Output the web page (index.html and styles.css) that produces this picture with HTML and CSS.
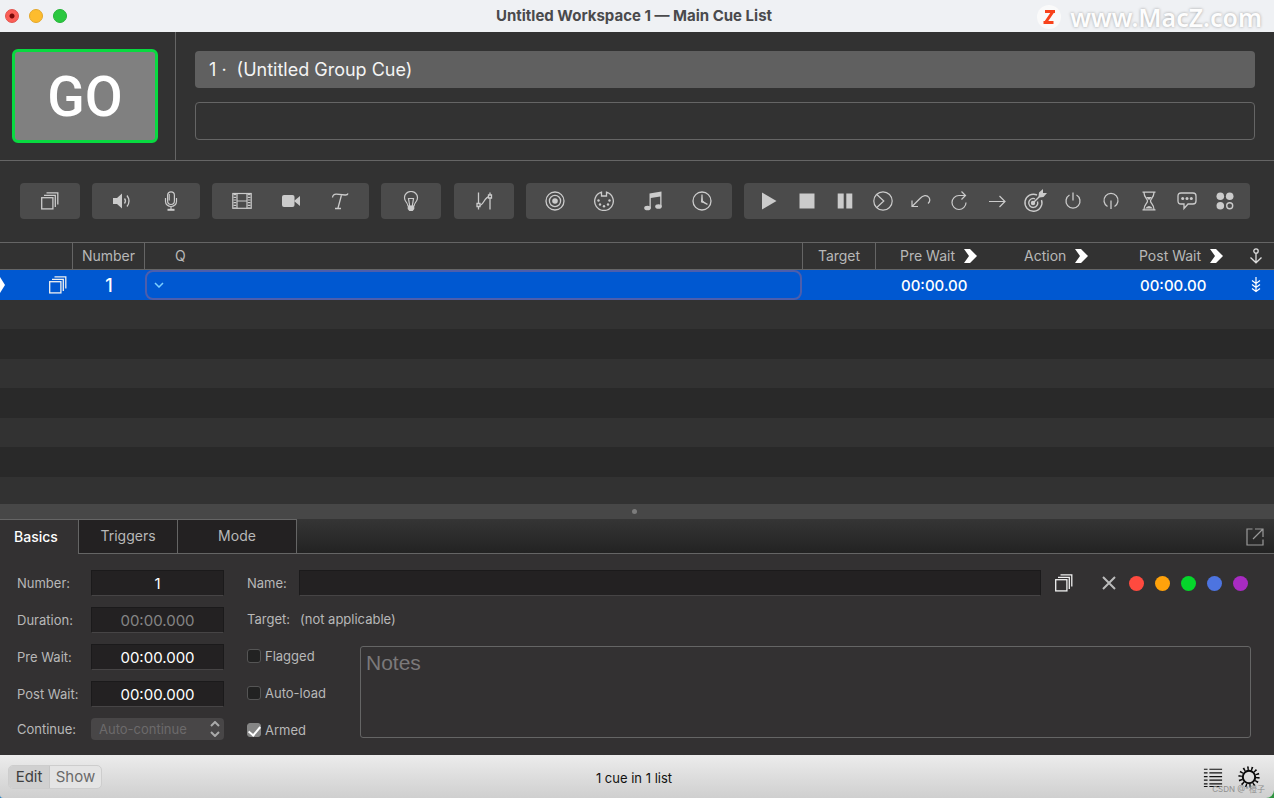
FILE: index.html
```html
<!doctype html>
<html lang="en">
<head>
    <meta charset="utf-8">
    <meta name="viewport" content="width=device-width, initial-scale=1">
    <title>Untitled Workspace 1 — Main Cue List</title>
    <link rel="stylesheet" href="styles.css">
</head>

<body>
<!-- Shared icons -->
<svg class="sprite" aria-hidden="true">
    <symbol id="i-group" viewBox="0 0 20 20">
        <g fill="none" stroke="currentColor" stroke-width="1.3">
            <rect x="1.7" y="6.7" width="11.2" height="11.2"/>
            <path d="M4 4.3h11.3V16M6.500 1.8h11.300V13.500"/>
        </g>
    </symbol>
</svg>

<div class="window">
    <!-- Title bar -->
    <header class="titlebar">
        <div class="lights">
            <button class="light light-close" aria-label="Close"></button>
            <button class="light light-min" aria-label="Minimize"></button>
            <button class="light light-zoom" aria-label="Zoom"></button>
        </div>
        <h1 class="title">Untitled Workspace 1 — Main Cue List</h1>
        <div class="site-mark">
            <svg width="24" height="24" viewBox="0 0 24 24" aria-hidden="true">
                <circle cx="12" cy="12" r="12" fill="#fafafa"/>
                <path d="M8 6.500h10M6.500 17.500h10M16 6.500L8.500 17.500" fill="none" stroke="#f8431c" stroke-width="3"/>
            </svg>
            <span>www.MacZ.com</span>
        </div>
    </header>

    <!-- GO button and standby cue -->
    <section class="standby">
        <div class="go-cell">
            <button class="go">GO</button>
        </div>
        <div class="standby-fields">
            <div class="standby-name"><span>1 ·</span><span>(Untitled Group Cue)</span></div>
            <div class="standby-notes"></div>
        </div>
    </section>

    <!-- Cue toolbar -->
    <nav class="toolbar">
        <div class="tool-group">
            <button aria-label="Group"><svg viewBox="0 0 20 20"><use href="#i-group"/></svg></button>
        </div>
        <div class="tool-group">
            <button aria-label="Audio"><svg viewBox="0 0 20 20">
                <path d="M1 7h4l5-4.500v15L5 13H1z" fill="currentColor"/>
                <path d="M12.500 7.500q2 2.500 0 5M15 4.500q4 5.500 0 11" fill="none" stroke="currentColor" stroke-width="1.3"/>
            </svg></button>
            <button aria-label="Mic"><svg viewBox="0 0 20 20" fill="none" stroke="currentColor" stroke-width="1.200">
                <rect x="6.600" y=".8" width="6.800" height="12.700" rx="3.400"/>
                <path d="M8.200 3v6.500M4.500 7v3.500a5.500 5 0 0 0 11 0V7M10 15.500v3"/>
                <path d="M6.500 18.800h7" stroke-width="2"/>
            </svg></button>
        </div>
        <div class="tool-group">
            <button aria-label="Video"><svg viewBox="0 0 20 20" fill="none" stroke="currentColor" stroke-width="1.200">
                <rect x=".8" y="2.500" width="18.400" height="14.800"/>
                <path d="M5 2.500v15M15 2.500v15M5 10h10"/>
                <path d="M2.900 3v14M17.100 3v14" stroke-width="2.800" stroke-dasharray="1.200 1.500"/>
            </svg></button>
            <button aria-label="Camera"><svg viewBox="0 0 20 20" fill="currentColor">
                <rect x="1" y="4" width="12.500" height="12" rx="2"/>
                <path d="M13 10l6-5v10z"/>
            </svg></button>
            <button aria-label="Text"><svg viewBox="0 0 20 20" fill="none" stroke="currentColor" stroke-width="1.300">
                <path d="M2.500 6.500Q3 3 6.500 3.200L15 4q2.500.2 3-1.500M11.500 4L8 17M5 17.500h6"/>
            </svg></button>
        </div>
        <div class="tool-group">
            <button aria-label="Light"><svg viewBox="0 0 20 20" fill="none" stroke="currentColor" stroke-width="1.200">
                <path d="M7 15Q6.500 12.500 4.500 10A6.500 6.500 0 0 1 3.500 6.500 6.500 6 0 0 1 16.500 6.500 6.500 6.500 0 0 1 15.500 10Q13.500 12.500 13 15M8.700 15L7.500 7.500h5L11.300 15"/>
                <path d="M6.700 14.500h6.600V18l-1.600 2H8.300l-1.600-2z" fill="currentColor" stroke="none"/>
            </svg></button>
        </div>
        <div class="tool-group">
            <button aria-label="Fade"><svg viewBox="0 0 20 20" fill="none" stroke="currentColor" stroke-width="1.300">
                <path d="M4.500 1.500v17M16 1.500v17M5 14.500C10 14.500 10 6 15.500 5.500"/>
                <path d="M3 12.500h3v3H3zM14.500 4h3v3h-3z" fill="#4b4b4b"/>
            </svg></button>
        </div>
        <div class="tool-group">
            <button aria-label="Network"><svg viewBox="0 0 20 20" fill="none" stroke="currentColor" stroke-width="1.300">
                <circle cx="10" cy="10" r="9"/><circle cx="10" cy="10" r="5.600"/>
                <circle cx="10" cy="10" r="2.800" fill="currentColor" stroke="none"/>
            </svg></button>
            <button aria-label="MIDI"><svg viewBox="0 0 20 20" fill="none" stroke="currentColor" stroke-width="1.300">
                <path d="M7.500 1.200A9.300 9.300 0 1 0 12.500 1.200V5h-5z"/>
                <g fill="currentColor" stroke="none"><circle cx="4.500" cy="9.500" r="1.200"/><circle cx="15.500" cy="9.500" r="1.200"/><circle cx="6" cy="13.500" r="1.200"/><circle cx="14" cy="13.500" r="1.200"/><circle cx="10" cy="15.300" r="1.200"/></g>
            </svg></button>
            <button aria-label="MIDI File"><svg viewBox="0 0 20 20" fill="currentColor">
                <path d="M6.500 2.500L18.500.5v15h-1.300V5.500L7.800 7v10.500H6.500z"/>
                <ellipse cx="4.500" cy="17" rx="3.300" ry="2.300"/><ellipse cx="15.500" cy="15.500" rx="3.300" ry="2.300"/>
            </svg></button>
            <button aria-label="Timecode"><svg viewBox="0 0 20 20" fill="none" stroke="currentColor" stroke-width="1.300">
                <circle cx="10" cy="10" r="9"/>
                <path d="M10 3.500V10.500l5.500 2.800"/>
                <path d="M8.800 11.300L10 5l.8 4.500 3.500 3z" fill="currentColor" stroke="none"/>
            </svg></button>
        </div>
        <div class="tool-group transport">
            <button aria-label="Start"><svg viewBox="0 0 20 20" fill="currentColor"><path d="M3 1.500L17.500 10 3 18.500z"/></svg></button>
            <button aria-label="Stop"><svg viewBox="0 0 20 20" fill="currentColor"><path d="M2.500 2.500h15v15h-15z"/></svg></button>
            <button aria-label="Pause"><svg viewBox="0 0 20 20" fill="currentColor"><path d="M2.700 2.500h6v15h-6zM11.300 2.500h6v15h-6z"/></svg></button>
            <button aria-label="Load"><svg viewBox="0 0 20 20" fill="none" stroke="currentColor" stroke-width="1.200">
                <circle cx="10" cy="10" r="9.200"/><path d="M3.800 3.500L10.800 10l-7 6.500"/>
            </svg></button>
            <button aria-label="Reset"><svg viewBox="0 0 20 20" fill="none" stroke="currentColor" stroke-width="1.200">
                <path d="M1 15.500L9 7.500C12 4 16 3.500 18 6.500Q20 10 17 12.500M1 9.500v6h6"/>
            </svg></button>
            <button aria-label="Devamp"><svg viewBox="0 0 20 20" fill="none" stroke="currentColor" stroke-width="1.200">
                <path d="M16 4.500H10A7 7 0 1 0 17 11.500M12.500.5l4 4-4 4"/>
            </svg></button>
            <button aria-label="GoTo"><svg viewBox="0 0 20 20" fill="none" stroke="currentColor" stroke-width="1.200">
                <path d="M2 10.500h16M12.500 5l5.500 5.500-5.500 5.500"/>
            </svg></button>
            <button aria-label="Target"><svg class="wide" viewBox="0 0 24 24" fill="none" stroke="currentColor" stroke-width="1.400">
                <path d="M14 6A8.500 8.500 0 1 0 18.500 11M12 9.800A4.500 4.500 0 1 0 14.500 12.500"/>
                <circle cx="10" cy="14" r="1.500" fill="currentColor"/>
                <path d="M10 14l8-8"/>
                <path d="M15.500 7.500l.5-4 4-3.500v4h4L20.500 8l-4 .5z" fill="currentColor" stroke="none"/>
            </svg></button>
            <button aria-label="Arm"><svg viewBox="0 0 20 20" fill="none" stroke="currentColor" stroke-width="1.300">
                <path d="M6.500 4A7 7 0 1 0 13.500 4M10 1.500v8"/>
            </svg></button>
            <button aria-label="Disarm"><svg viewBox="0 0 20 20" fill="none" stroke="currentColor" stroke-width="1.300">
                <path d="M6.500 15.500A7 7 0 1 1 13.500 15.500M10 9.500v8.500"/>
            </svg></button>
            <button aria-label="Wait"><svg viewBox="0 0 20 20" fill="none" stroke="currentColor" stroke-width="1.300">
                <path d="M3.500 1.200h13M3.500 18.800h13M5 1.500C5 6.500 8.500 7.500 8.500 10S5 13.500 5 18.500M15 1.500C15 6.500 11.500 7.500 11.500 10S15 13.500 15 18.500"/>
                <path d="M7 6h6l-3 3zM6 17.500q4-5 8 0z" fill="currentColor" stroke="none"/>
            </svg></button>
            <button aria-label="Memo"><svg viewBox="0 0 20 20" fill="none" stroke="currentColor" stroke-width="1.300">
                <path d="M4 2h12q3 0 3 3v5q0 3-3 3h-5l-4 4.500V13H4q-3 0-3-3V5q0-3 3-3z"/>
                <g fill="currentColor" stroke="none"><circle cx="5.700" cy="7.500" r="1.500"/><circle cx="10" cy="7.500" r="1.500"/><circle cx="14.300" cy="7.500" r="1.500"/></g>
            </svg></button>
            <button aria-label="Script"><svg viewBox="0 0 20 20" fill="currentColor">
                <circle cx="5.300" cy="5.300" r="3.800"/><circle cx="14.700" cy="5.300" r="3.800"/><circle cx="5.300" cy="14.700" r="3.800"/>
                <circle cx="14.700" cy="14.700" r="3" fill="none" stroke="currentColor" stroke-width="1.400"/>
            </svg></button>
        </div>
    </nav>

    <!-- Cue list -->
    <main class="cue-list">
        <table>
            <colgroup>
                <col class="col-status"><col class="col-number"><col><col class="col-target">
                <col class="col-pre"><col class="col-action"><col class="col-post"><col class="col-anchor">
            </colgroup>
            <thead>
            <tr>
                <th></th>
                <th>Number</th>
                <th class="th-q">Q</th>
                <th>Target</th>
                <th class="th-time">Pre Wait <svg class="arrow" viewBox="0 0 14 14"><path d="M1 0h6l7 7-7 7H1l5-7z" fill="#fff"/></svg></th>
                <th class="th-time">Action <svg class="arrow" viewBox="0 0 14 14"><path d="M1 0h6l7 7-7 7H1l5-7z" fill="#fff"/></svg></th>
                <th class="th-time">Post Wait <svg class="arrow" viewBox="0 0 14 14"><path d="M1 0h6l7 7-7 7H1l5-7z" fill="#fff"/></svg></th>
                <th><svg class="mini" viewBox="0 0 14 16" fill="none" stroke="#ddd" stroke-width="1.300"><circle cx="7" cy="3" r="2.200"/><path d="M7 5v9.500M1.500 9.500L7 14.800l5.500-5.300"/></svg></th>
            </tr>
            </thead>
            <tbody>
            <tr class="selected">
                <td class="status"><svg class="playhead" viewBox="0 0 5 16"><path d="M0 0l5 8-5 8z" fill="#fff"/></svg><svg class="cue-icon" viewBox="0 0 20 20"><use href="#i-group"/></svg></td>
                <td class="number">1</td>
                <td class="q">
                    <div class="q-edit">
                        <svg viewBox="0 0 10 6" aria-hidden="true"><path d="M1 1l4 4 4-4" fill="none" stroke="#7dd0ff" stroke-width="1.500"/></svg>
                        <input type="text" aria-label="Cue name">
                    </div>
                </td>
                <td></td>
                <td class="time">00:00.00</td>
                <td></td>
                <td class="time">00:00.00</td>
                <td><svg class="mini" viewBox="0 0 14 16" fill="none" stroke="#fff" stroke-width="1.200"><path d="M7 0v14.500M3 3.500l4 3 4-3M3 7.500l4 3 4-3M3 11.500l4 3 4-3"/></svg></td>
            </tr>
            <tr><td colspan="8"></td></tr>
            <tr><td colspan="8"></td></tr>
            <tr><td colspan="8"></td></tr>
            <tr><td colspan="8"></td></tr>
            <tr><td colspan="8"></td></tr>
            <tr><td colspan="8"></td></tr>
            <tr><td colspan="8"></td></tr>
            </tbody>
        </table>
    </main>

    <div class="splitter"><span></span></div>

    <!-- Inspector -->
    <section class="inspector">
        <div class="tabs">
            <button class="tab tab-basics active">Basics</button>
            <button class="tab tab-triggers">Triggers</button>
            <button class="tab tab-mode">Mode</button>
            <button class="popout" aria-label="Open in new window"><svg viewBox="0 0 18 18" fill="none" stroke="#9a9a9a" stroke-width="1.200">
                <path d="M6.500 1H1v16h16v-5.500M9 1h8v8M17 1L7 11"/>
            </svg></button>
        </div>
        <form class="basics">
            <div class="timing">
                <label for="number">Number:</label>
                <input class="field" id="number" type="text" value="1">
                <label for="duration">Duration:</label>
                <input class="field" id="duration" type="text" value="00:00.000" disabled>
                <label for="pre">Pre Wait:</label>
                <input class="field" id="pre" type="text" value="00:00.000">
                <label for="post">Post Wait:</label>
                <input class="field" id="post" type="text" value="00:00.000">
                <label for="continue">Continue:</label>
                <div class="select">
                    <select id="continue" disabled>
                        <option>Auto-continue</option>
                    </select>
                    <svg viewBox="0 0 10 16" aria-hidden="true"><path d="M1 5l4-4 4 4M1 11l4 4 4-4" fill="none" stroke="#aaa" stroke-width="2"/></svg>
                </div>
            </div>
            <div class="details">
                <div class="name-row">
                    <label for="name">Name:</label>
                    <input class="field name" id="name" type="text">
                    <svg class="cue-icon" viewBox="0 0 20 20" aria-hidden="true"><use href="#i-group"/></svg>
                    <div class="swatches">
                        <button type="button" class="no-color" aria-label="No color"><svg viewBox="0 0 14 14"><path d="M1 1l12 12M13 1L1 13" stroke="#bbb" stroke-width="2"/></svg></button>
                        <button type="button" class="swatch red" aria-label="Red"></button>
                        <button type="button" class="swatch orange" aria-label="Orange"></button>
                        <button type="button" class="swatch green" aria-label="Green"></button>
                        <button type="button" class="swatch blue" aria-label="Blue"></button>
                        <button type="button" class="swatch purple" aria-label="Purple"></button>
                    </div>
                </div>
                <div class="target-row"><span>Target:</span><span>(not applicable)</span></div>
                <div class="lower">
                    <div class="checks">
                        <label><input type="checkbox">Flagged</label>
                        <label><input type="checkbox">Auto-load</label>
                        <label><input type="checkbox" checked>Armed</label>
                    </div>
                    <textarea placeholder="Notes" aria-label="Notes"></textarea>
                </div>
            </div>
        </form>
    </section>

    <!-- Footer -->
    <footer class="footer">
        <div class="modes">
            <button class="on">Edit</button>
            <button>Show</button>
        </div>
        <div class="count">1 cue in 1 list</div>
        <div class="footer-tools">
            <button aria-label="Lists"><svg viewBox="0 0 20 22" fill="none" stroke="#111">
                <path d="M0 2.500h4M6 2.500h14M0 6.500h4M6 6.500h14M0 10.500h4M6 10.500h14M0 14.500h4M6 14.500h14M0 18.500h4M6 18.500h14M0 21.500h4M6 21.500h14" stroke-width="1.300"/>
            </svg></button>
            <button aria-label="Settings"><svg viewBox="0 0 22 22" fill="none" stroke="#0a0a0a">
                <circle cx="11" cy="11" r="6.200" stroke-width="2"/>
                <circle cx="11" cy="11" r="8.800" stroke-width="3.600" stroke-dasharray="1.500 2.449"/>
            </svg></button>
        </div>
        <span class="credit">CSDN @*橙子</span>
    </footer>
</div>
</body>
</html>
```
FILE: styles.css
```css
* {
    box-sizing: border-box;
}

:root {
    --bg: #323232;
    --line: #656565;
    --text: #b8b8b8;
    --field: #232122;
    --blue: #0058d1;
}

body {
    margin: 0;
    background: linear-gradient(90deg, #1f7fc4 50%, #2f9440 50%);
    color: var(--text);
    font-family: Inter, "Liberation Sans", "Noto Sans CJK SC", sans-serif;
    font-size: 13px;
}

button,
input,
select,
textarea {
    font: inherit;
    color: inherit;
    padding: 0;
    border: 0;
    background: none;
}

svg {
    display: block;
}

.sprite {
    position: absolute;
    width: 0;
    height: 0;
}

.window {
    display: flex;
    flex-direction: column;
    height: 100vh;
}

/* Title bar */
.titlebar {
    position: relative;
    display: flex;
    align-items: center;
    height: 32px;
    flex: none;
    background: #eff1f4;
}

.lights {
    display: flex;
    gap: 10px;
    width: 80px;
    padding-left: 5px;
}

.light {
    width: 14px;
    height: 14px;
    border-radius: 50%;
}

.light-close {
    background: radial-gradient(circle, #7a0a08 2px, #fb5f57 3px);
    border: 1px solid #e2504a;
}

.light-min {
    background: #fdbc2e;
    border: 1px solid #e3a72b;
}

.light-zoom {
    background: #2ac83f;
    border: 1px solid #25b338;
}

.title {
    flex: 1;
    margin: 0 86px 0 0;
    text-align: center;
    font-size: 15px;
    line-height: 30px;
    font-weight: 700;
    color: #4a4a4c;
}

.site-mark {
    position: absolute;
    right: 12px;
    top: 4px;
    display: flex;
    align-items: center;
    gap: 9px;
    font: 600 25px/26px "Noto Sans", sans-serif;
    color: #fdfdfd;
    text-shadow: 0 0 3px #a0a0a0;
}

/* Standby area */
.standby {
    display: flex;
    flex: none;
    height: 129px;
    background: var(--bg);
    border-bottom: 1px solid var(--line);
}

.go-cell {
    width: 176px;
    padding: 17px 0 0 12px;
    border-right: 1px solid var(--line);
}

.go {
    width: 146px;
    height: 94px;
    padding-top: 2px;
    border: 3px solid #08da40;
    border-radius: 6px;
    background: #808080;
    color: #fff;
    font: 500 55px/86px Roboto, sans-serif;
}

.standby-fields {
    flex: 1;
    display: flex;
    flex-direction: column;
    gap: 14px;
    padding: 19px 19px 0;
}

.standby-name {
    display: flex;
    gap: 10px;
    height: 37px;
    padding-left: 14px;
    border-radius: 4px;
    background: #606060;
    color: #f4f4f4;
    font-size: 18px;
    line-height: 37px;
}

.standby-notes {
    height: 38px;
    border: 1px solid var(--line);
    border-radius: 4px;
}

/* Toolbar */
.toolbar {
    display: flex;
    justify-content: space-between;
    flex: none;
    height: 81px;
    padding: 22px 24px 0 20px;
    background: var(--bg);
}

.tool-group {
    display: flex;
    justify-content: center;
    min-width: 60px;
    height: 36px;
    padding: 0 5px;
    border-radius: 4px;
    background: #4b4b4b;
    color: #cbcbcb;
}

.tool-group button {
    display: flex;
    align-items: center;
    justify-content: center;
    width: 49px;
}

.tool-group svg {
    width: 20px;
    height: 20px;
}

.tool-group .wide {
    width: 24px;
    height: 24px;
}

.transport {
    padding: 0 6px;
}

.transport button {
    width: 38px;
}

/* Cue list */
.cue-list {
    flex: 1;
    min-height: 0;
    overflow: hidden;
    background: var(--bg);
}

table {
    width: 100%;
    table-layout: fixed;
    border-collapse: separate;
    border-spacing: 0;
}

.col-status,
.col-target {
    width: 73px;
}

.col-number {
    width: 72px;
}

.col-pre {
    width: 124px;
}

.col-action {
    width: 115px;
}

.col-post {
    width: 123px;
}

.col-anchor {
    width: 36px;
}

th,
td {
    padding: 0;
}

th {
    height: 28px;
    border-top: 1px solid var(--line);
    border-bottom: 1px solid var(--line);
    font-size: 14px;
    line-height: 24px;
    font-weight: 400;
}

th:nth-child(-n+4) {
    border-right: 1px solid var(--line);
}

.th-q {
    padding-left: 30px;
    text-align: left;
}

.th-time {
    padding-left: 24px;
    text-align: left;
    white-space: nowrap;
}

.arrow {
    display: inline-block;
    width: 14px;
    height: 14px;
    margin-left: 4px;
    vertical-align: -2px;
}

.mini {
    width: 14px;
    height: 16px;
    margin: 0 auto;
}

td {
    height: 29px;
}

tr:nth-child(odd) td {
    height: 30px;
}

tbody tr:nth-child(odd) {
    background: #292929;
}

tbody tr.selected {
    background: var(--blue);
    color: #fff;
}

.status {
    position: relative;
}

.playhead {
    position: absolute;
    left: 0;
    top: 7px;
    width: 5px;
    height: 16px;
}

.cue-icon {
    width: 20px;
    height: 20px;
    color: #f0f0f0;
}

.status .cue-icon {
    margin-left: 48px;
}

.number {
    text-align: center;
    font-size: 18px;
    font-weight: 500;
}

.q-edit {
    display: flex;
    align-items: center;
    gap: 8px;
    height: 30px;
    margin-right: 1px;
    padding: 0 7px;
    border: 2px solid #4d5eac;
    border-radius: 8px;
}

.q-edit svg {
    width: 10px;
    height: 6px;
}

.q-edit input {
    flex: 1;
    outline: 0;
}

.time {
    padding-left: 25px;
    font-size: 15px;
    font-weight: 500;
}

.splitter {
    display: flex;
    align-items: center;
    justify-content: center;
    flex: none;
    height: 15px;
    padding-right: 6px;
    background: #474747;
}

.splitter span {
    width: 5px;
    height: 5px;
    border-radius: 50%;
    background: #7c7c7c;
}

/* Inspector */
.inspector {
    flex: none;
    height: 236px;
    background: #333132;
}

.tabs {
    display: flex;
    height: 35px;
    background: linear-gradient(#353535, #222);
    box-shadow: inset 0 -1px var(--line);
}

.tab {
    padding-bottom: 2px;
    border: 1px solid var(--line);
    border-left: 0;
    background: var(--field);
    font-size: 14px;
}

.tab.active {
    border-bottom: 0;
    background: #333132;
    color: #fff;
    font-weight: 500;
}

.tab-basics {
    width: 79px;
    padding-right: 6px;
}

.tab-triggers {
    width: 99px;
}

.tab-mode {
    width: 119px;
}

.popout {
    margin: 0 10px 0 auto;
}

.popout svg {
    width: 18px;
    height: 18px;
}

.basics {
    display: flex;
    gap: 23px;
    padding: 16px 23px 0 17px;
}

.timing {
    display: grid;
    grid-template-columns: 74px 133px;
    grid-template-rows: repeat(4, 26px) 22px;
    row-gap: 11px;
    align-items: center;
}

.timing label {
    line-height: 24px;
}

.field {
    width: 100%;
    height: 26px;
    border: 1px solid #1b1a1b;
    border-bottom-color: #464445;
    background: var(--field);
    color: #fff;
    font-size: 15px;
    text-align: center;
}

.field:disabled {
    color: #858585;
}

.select {
    position: relative;
}

.select select {
    appearance: none;
    display: block;
    width: 100%;
    height: 22px;
    padding-left: 8px;
    border-radius: 4px;
    background: #484647;
    color: #6c6a6b;
    opacity: 1;
    font-size: 13px;
}

.select svg {
    position: absolute;
    right: 4px;
    top: 3px;
    width: 10px;
    height: 16px;
}

.details {
    flex: 1;
    display: flex;
    flex-direction: column;
    gap: 11px;
}

.name-row {
    display: flex;
    align-items: center;
    height: 26px;
}

.name-row label {
    width: 52px;
}

.name {
    flex: 1;
    text-align: left;
    margin-right: 13px;
}

.swatches {
    display: flex;
    align-items: center;
    gap: 11px;
    margin-left: 28px;
    padding-right: 3px;
}

.no-color {
    margin-right: 2px;
}

.no-color svg {
    width: 14px;
    height: 14px;
}

.swatch {
    width: 15px;
    height: 15px;
    border-radius: 50%;
}

.red {
    background: #ff4a3f;
}

.orange {
    background: #ffa20b;
}

.green {
    background: #05d62b;
}

.blue {
    background: #4d74e0;
}

.purple {
    background: #a82bc2;
}

.target-row {
    display: flex;
    gap: 10px;
    height: 26px;
    line-height: 24px;
}

.lower {
    display: flex;
    gap: 13px;
}

.checks {
    display: flex;
    flex-direction: column;
    gap: 13px;
    width: 100px;
}

.checks label {
    display: flex;
    align-items: center;
    gap: 4px;
    height: 24px;
}

.checks input {
    appearance: none;
    width: 14px;
    height: 14px;
    margin: 0;
    border: 1px solid #555;
    border-radius: 3px;
    background: #222;
}

.checks input:checked {
    background: #858585;
    border-color: #858585;
}

.checks input:checked::after {
    content: "";
    display: block;
    width: 5px;
    height: 10px;
    margin: 0 auto;
    border: solid #fff;
    border-width: 0 2px 2px 0;
    transform: rotate(40deg);
}

textarea {
    flex: 1;
    height: 92px;
    margin-top: 2px;
    padding: 3px 5px;
    border: 1px solid var(--line);
    border-radius: 3px;
    resize: none;
    font: 21px/26px "Liberation Sans", sans-serif;
}

textarea::placeholder {
    color: #7b797a;
}

/* Footer */
.footer {
    position: relative;
    display: grid;
    grid-template-columns: 1fr auto 1fr;
    align-items: center;
    flex: none;
    height: 43px;
    padding: 0 14px 0 8px;
    border-radius: 0 0 8px 3px;
    background: linear-gradient(#ececec, #cfcfcf);
    color: #111;
}

.modes {
    display: flex;
    justify-self: start;
    border: 1px solid #cdcdcd;
    border-radius: 5px;
    background: #e4e4e4;
    overflow: hidden;
}

.modes button {
    width: 51px;
    height: 22px;
    color: #6a6a6a;
    font-size: 15px;
    line-height: 22px;
}

.modes .on {
    width: 41px;
    border-right: 1px solid #c6c6c6;
    background: #d0d0d0;
    color: #3f3f3f;
}

.count {
    padding-top: 2px;
}

.footer-tools {
    display: flex;
    align-items: center;
    justify-self: end;
    gap: 15px;
}

.footer-tools svg {
    width: 20px;
    height: 20px;
}

.footer-tools button:last-child svg {
    width: 22px;
    height: 22px;
}

.credit {
    position: absolute;
    right: 9px;
    bottom: 3px;
    color: #8e8e8e;
    font-size: 8px;
    line-height: 12px;
}
```
